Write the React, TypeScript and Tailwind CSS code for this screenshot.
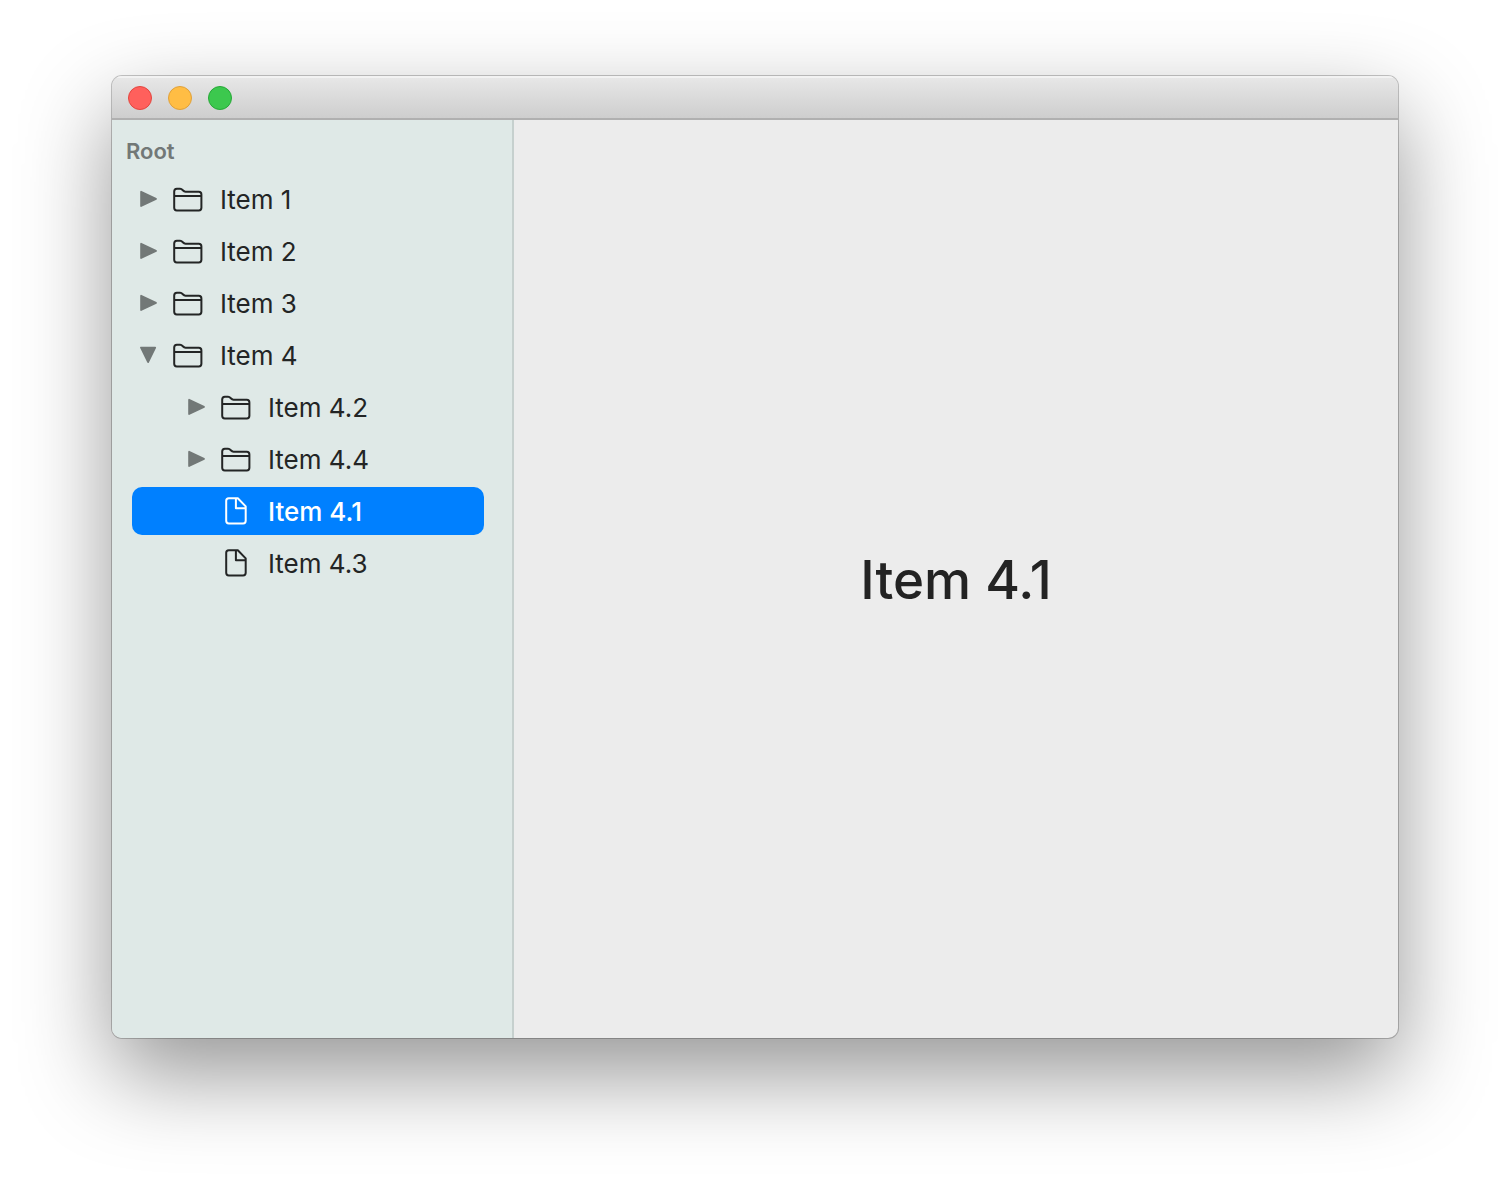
import { useState } from "react";

type Node = { name: string; children?: Node[] };

const tree: Node[] = [
  { name: "Item 1", children: [] },
  { name: "Item 2", children: [] },
  { name: "Item 3", children: [] },
  {
    name: "Item 4",
    children: [
      { name: "Item 4.2", children: [] },
      { name: "Item 4.4", children: [] },
      { name: "Item 4.1" },
      { name: "Item 4.3" },
    ],
  },
];

function FolderIcon() {
  return (
    <svg className="size-8 shrink-0" viewBox="0 0 32 32" fill="none" stroke="currentColor" strokeWidth="2" aria-hidden="true">
      <path d="M2.2 24.8V8.6Q2.2 5.8 4.9 5.8H8.1C10.9 5.8 10.7 8.7 13.5 8.7H26.8Q29.4 8.7 29.4 11.4V24.8Q29.4 27.4 26.8 27.4H4.8Q2.2 27.4 2.2 24.8Z" />
      <path d="M2.2 13H29.4" />
    </svg>
  );
}

function FileIcon() {
  return (
    <svg className="size-8 shrink-0" viewBox="0 0 32 32" fill="none" stroke="currentColor" strokeWidth="2" strokeLinejoin="round" aria-hidden="true">
      <path d="M8.8 3.2H17.8L25.7 11.4V25.8Q25.7 28.4 23.1 28.4H8.8Q6.2 28.4 6.2 25.8V5.8Q6.2 3.2 8.8 3.2Z" />
      <path d="M15.9 3.2V13.3H25.7" />
    </svg>
  );
}

function Triangle({ open }: { open: boolean }) {
  return (
    <svg className="size-4.5" viewBox="0 0 18 18" fill="#727877" stroke="#727877" strokeWidth="1.8" strokeLinejoin="round" aria-hidden="true">
      {open ? <path d="M1 1.6H15.2L8.1 16Z" /> : <path d="M1.1 1.8V16L16 8.9Z" />}
    </svg>
  );
}

type RowProps = {
  node: Node;
  depth: number;
  open: string[];
  selected: string;
  onToggle: (name: string) => void;
  onSelect: (name: string) => void;
};

function TreeRow({ node, depth, open, selected, onToggle, onSelect }: RowProps) {
  const isOpen = open.includes(node.name);
  const isSelected = selected === node.name;
  return (
    <li className="flex flex-col gap-1">
      <div
        className={
          "flex h-12 items-center gap-3.5 rounded-[10px] pr-2 " +
          (depth > 0 ? "pl-14 " : "pl-2 ") +
          (isSelected ? "bg-[#0080ff] font-medium text-white" : "text-[#232525]")
        }
      >
        {node.children ? (
          <button type="button" aria-label={`Toggle ${node.name}`} aria-expanded={isOpen} onClick={() => onToggle(node.name)}>
            <Triangle open={isOpen} />
          </button>
        ) : (
          <span className="w-4.5" />
        )}
        <button type="button" className="flex flex-1 items-center gap-4 text-left" onClick={() => onSelect(node.name)}>
          {node.children ? <FolderIcon /> : <FileIcon />}
          <span className="pt-0.5">{node.name}</span>
        </button>
      </div>
      {isOpen && node.children && node.children.length > 0 && (
        <ul className="flex flex-col gap-1">
          {node.children.map((child) => (
            <TreeRow key={child.name} node={child} depth={depth + 1} open={open} selected={selected} onToggle={onToggle} onSelect={onSelect} />
          ))}
        </ul>
      )}
    </li>
  );
}

export default function App() {
  const [open, setOpen] = useState<string[]>(["Item 4"]);
  const [selected, setSelected] = useState("Item 4.1");
  const toggle = (name: string) =>
    setOpen((names) => (names.includes(name) ? names.filter((n) => n !== name) : [...names, name]));

  return (
    <div className="flex min-h-screen bg-white px-28 pt-19 pb-37 font-['Inter',sans-serif]">
      <main className="flex flex-1 flex-col overflow-hidden rounded-[10px] bg-[#ececec] shadow-[0_0_0_1px_rgba(0,0,0,0.22),0_36px_90px_rgba(0,0,0,0.42)]">
        <header className="flex h-11 items-center gap-4 border-b-2 border-[#b0b0b0] bg-linear-to-b from-[#e8e8e8] to-[#cecece] px-4 pt-0.5 shadow-[inset_0_2px_0_#f2f2f2]">
          <button type="button" aria-label="Close" className="size-6 rounded-full border border-[#e2463f] bg-[#ff605c]" />
          <button type="button" aria-label="Minimize" className="size-6 rounded-full border border-[#dfa03a] bg-[#ffbd44]" />
          <button type="button" aria-label="Zoom" className="size-6 rounded-full border border-[#27a838] bg-[#3cc84e]" />
        </header>
        <div className="flex flex-1">
          <nav className="w-[402px] shrink-0 border-r-2 border-[#c6d0ce] bg-[#dfe9e7] pt-4">
            <h2 className="px-3.5 text-[22px] leading-[30px] font-semibold text-[#727877]">Root</h2>
            <ul className="mt-[9px] mr-7 ml-5 flex flex-col gap-1 text-[26px] leading-[34px]">
              {tree.map((node) => (
                <TreeRow key={node.name} node={node} depth={0} open={open} selected={selected} onToggle={toggle} onSelect={setSelected} />
              ))}
            </ul>
          </nav>
          <section className="flex flex-1 items-center justify-center pt-0.5">
            <h1 className="text-[53px] leading-16 font-medium text-[#232323]">{selected}</h1>
          </section>
        </div>
      </main>
    </div>
  );
}
